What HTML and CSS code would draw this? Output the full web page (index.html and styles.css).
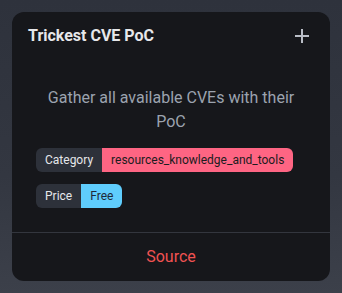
FILE: index.html
```html
<!DOCTYPE html>
<html lang="en">
<head>
<meta charset="utf-8">
<title>Trickest CVE PoC</title>
<link rel="stylesheet" href="styles.css">
</head>
<body>
<div class="card">
  <div class="card-header">
    <h2 class="title">Trickest CVE PoC</h2>
    <button class="add" aria-label="Add">
      <svg width="24" height="24" viewBox="0 0 24 24"><path d="M12 5v14M5 12h14" stroke="currentColor" stroke-width="2" fill="none"/></svg>
    </button>
  </div>
  <div class="card-body">
    <p class="desc">Gather all available CVEs with their PoC</p>
    <div class="badges">
      <span class="badge"><span class="badge-label">Category</span><span class="badge-value pink">resources_knowledge_and_tools</span></span>
      <span class="badge"><span class="badge-label">Price</span><span class="badge-value blue">Free</span></span>
    </div>
  </div>
  <div class="card-footer">
    <a class="source" href="#">Source</a>
  </div>
</div>
</body>
</html>
```
FILE: styles.css
```css
html, body {
  margin: 0;
  height: 100%;
}
body {
  padding: 12px;
  box-sizing: border-box;
  font-family: Roboto, "Liberation Sans", sans-serif;
  background: linear-gradient(to bottom, #2e323c 0%, #333741 60%, #3c404a 100%);
}
.card {
  background: #16171b;
  border-radius: 12px;
  height: 269px;
  display: flex;
  flex-direction: column;
}
.card-header {
  display: flex;
  align-items: center;
  justify-content: space-between;
  padding: 12px 16px;
}
.title {
  margin: 0;
  font-size: 16px;
  line-height: 24px;
  font-weight: 700;
  color: #e6e7ea;
}
.add {
  width: 24px;
  height: 24px;
  padding: 0;
  border: 0;
  background: none;
  color: #b9bdc6;
  display: flex;
}
.card-body {
  flex: 1;
  padding: 26px 24px 24px;
}
.desc {
  margin: 0 0 14px;
  text-align: center;
  font-size: 16px;
  line-height: 24px;
  color: #9ca3af;
}
.badges {
  display: flex;
  flex-direction: column;
  align-items: flex-start;
  gap: 12px;
}
.badge {
  display: inline-flex;
  border-radius: 6px;
  overflow: hidden;
  font-size: 12px;
  line-height: 24px;
}
.badge-label {
  background: #2d313a;
  color: #e5e7eb;
  padding: 0 9px;
}
.badge-value {
  padding: 0 9px;
  color: #1b1c20;
}
.pink { background: #fe6583; }
.blue { background: #5fcdfd; color: #1e2a3a; }
.card-footer {
  border-top: 1px solid #33363e;
  height: 48px;
  display: flex;
  align-items: center;
  justify-content: center;
}
.source {
  color: #f05252;
  text-decoration: none;
  font-size: 16px;
  line-height: 24px;
}
```
